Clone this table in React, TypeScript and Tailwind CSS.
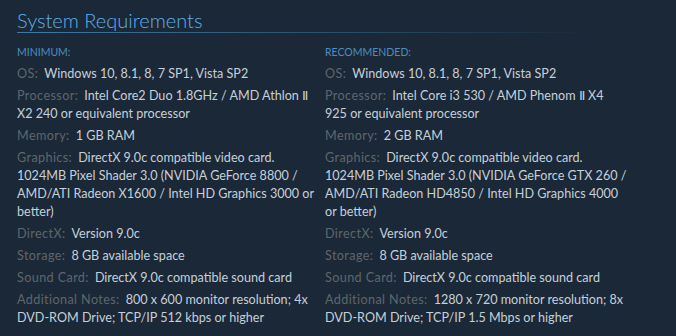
type Req = { label: string; value: string }

const minimum: Req[] = [
  { label: 'OS:', value: 'Windows 10, 8.1, 8, 7 SP1, Vista SP2' },
  { label: 'Processor:', value: 'Intel Core2 Duo 1.8GHz / AMD Athlon Ⅱ X2 240 or equivalent processor' },
  { label: 'Memory:', value: '1 GB RAM' },
  {
    label: 'Graphics:',
    value:
      'DirectX 9.0c compatible video card.\n1024MB Pixel Shader 3.0 (NVIDIA GeForce 8800 / AMD/ATI Radeon X1600 / Intel HD Graphics 3000 or better)',
  },
  { label: 'DirectX:', value: 'Version 9.0c' },
  { label: 'Storage:', value: '8 GB available space' },
  { label: 'Sound Card:', value: 'DirectX 9.0c compatible sound card' },
  { label: 'Additional Notes:', value: '800 x 600 monitor resolution; 4x DVD-ROM Drive; TCP/IP 512 kbps or higher' },
]

const recommended: Req[] = [
  { label: 'OS:', value: 'Windows 10, 8.1, 8, 7 SP1, Vista SP2' },
  { label: 'Processor:', value: 'Intel Core i3 530 / AMD Phenom Ⅱ  X4 925 or equivalent processor' },
  { label: 'Memory:', value: '2 GB RAM' },
  {
    label: 'Graphics:',
    value:
      'DirectX 9.0c compatible video card.\n1024MB Pixel Shader 3.0 (NVIDIA GeForce GTX 260 / AMD/ATI Radeon HD4850 / Intel HD Graphics 4000 or better)',
  },
  { label: 'DirectX:', value: 'Version 9.0c' },
  { label: 'Storage:', value: '8 GB available space' },
  { label: 'Sound Card:', value: 'DirectX 9.0c compatible sound card' },
  { label: 'Additional Notes:', value: '1280 x 720 monitor resolution; 8x DVD-ROM Drive; TCP/IP 1.5 Mbps or higher' },
]

function ReqColumn({ title, items }: { title: string; items: Req[] }) {
  return (
    <div className="w-[308px] pr-[5px]">
      <div className="text-[10.5px] uppercase text-[#4b8ebf] leading-[18px] mb-[4px]">{title}</div>
      <ul>
        {items.map((r) => (
          <li key={r.label} className="text-[12.6px] leading-[18px] text-[#c6d0d8] mb-[4px] whitespace-pre-line">
            <span className="tracking-[0.4px] text-[#5f666b] mr-[6px]">{r.label}</span>
            {r.value}
          </li>
        ))}
      </ul>
    </div>
  )
}

export default function App() {
  return (
    <div className="w-[676px] h-[336px] bg-[#1b2838] pl-[17px] pt-[8px] font-['Lato','Open_Sans',sans-serif] overflow-hidden">
      <h2 className="text-[20px] font-light text-[#5fb0ea] leading-[24px]">System Requirements</h2>
      <div className="h-px w-[580px] bg-gradient-to-r from-[#3a7ca8] via-[#2a5470] to-transparent" />
      <div className="flex mt-[10px]">
        <ReqColumn title="Minimum:" items={minimum} />
        <ReqColumn title="Recommended:" items={recommended} />
      </div>
    </div>
  )
}
